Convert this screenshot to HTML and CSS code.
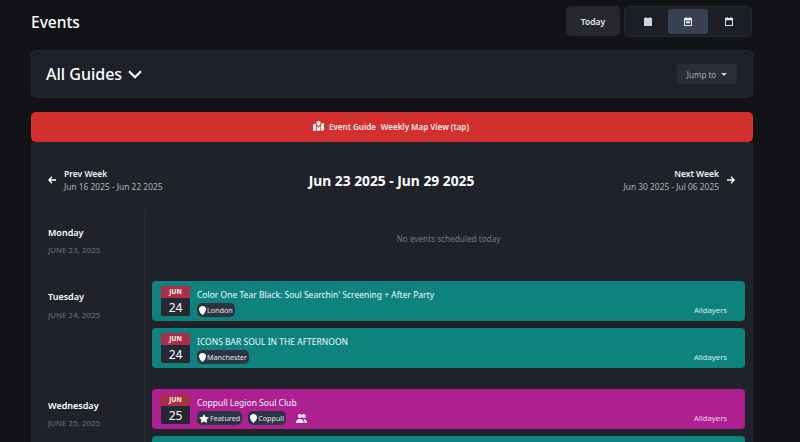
FILE: index.html
```html
<!DOCTYPE html>
<html>
  <head>
    <title>Events</title>
    <link rel="stylesheet" href="styles.css">
  </head>
  <body>
    <div class="topbar">
      <h1>Events</h1>
      <div class="top-actions">
        <button class="today">Today</button>
        <div class="views">
          <span class="view">
            <svg width="8" height="9" viewBox="0 0 10 11"><path fill="#cbd5e1" d="M2 0h1.4v1.2h3.2V0H8v1.2h2V11H0V1.2h2z"/></svg>
          </span>
          <span class="view active">
            <svg width="8" height="9" viewBox="0 0 10 11"><path fill="#f1f5f9" fill-rule="evenodd" d="M2 0h1.4v1.2h3.2V0H8v1.2h2V11H0V1.2h2zM1.2 4v5.8h7.6V4zM2.5 5.2h5v2.6h-5z"/></svg>
          </span>
          <span class="view">
            <svg width="8" height="9" viewBox="0 0 10 11"><path fill="#e2e8f0" fill-rule="evenodd" d="M2 0h1.4v1.2h3.2V0H8v1.2h2V11H0V1.2h2zM1.2 4v5.8h7.6V4z"/></svg>
          </span>
        </div>
      </div>
    </div>

    <div class="guides">
      <div class="guides-title">
        All Guides
        <svg width="14" height="9" viewBox="0 0 14 9"><path fill="none" stroke="#fff" stroke-width="2.2" d="M1 1.2l6 6 6-6"/></svg>
      </div>
      <button class="jump">Jump to <span class="caret"></span></button>
    </div>

    <div class="banner">
      <svg width="11" height="10" viewBox="0 0 11 10"><path fill="#fff" d="M5.5 0C4.2 0 3.3 1 3.3 2.1c0 .9 1.3 2.5 2.2 3.4.9-.9 2.2-2.5 2.2-3.4C7.700 1 6.800 0 5.500 0zM0 3.800l2.900-1v6.600L0 10zM3.700 5v5l3.600-.6V5l-1.800 1.700zM8.100 3l2.900-1v7l-2.900 1z"/></svg>
      <span>Event Guide</span>
      <span>Weekly Map View (tap)</span>
    </div>

    <div class="calendar">
      <div class="week-nav">
        <div class="week-link">
          <svg width="8" height="8" viewBox="0 0 8 8"><path fill="none" stroke="#fff" stroke-width="1.300" d="M4 .8L.9 4 4 7.200M1 4h7"/></svg>
          <div>
            <div class="week-label">Prev Week</div>
            <div class="week-dates">Jun 16 2025 - Jun 22 2025</div>
          </div>
        </div>
        <div class="week-current">Jun 23 2025 - Jun 29 2025</div>
        <div class="week-link next">
          <div>
            <div class="week-label">Next Week</div>
            <div class="week-dates">Jun 30 2025 - Jul 06 2025</div>
          </div>
          <svg width="8" height="8" viewBox="0 0 8 8"><path fill="none" stroke="#fff" stroke-width="1.300" d="M4 .8L7.100 4 4 7.200M7 4H0"/></svg>
        </div>
      </div>

      <div class="day monday">
        <div class="day-name">
          <strong>Monday</strong>
          <span>JUNE 23, 2025</span>
        </div>
        <div class="day-events empty">No events scheduled today</div>
      </div>

      <div class="day tuesday">
        <div class="day-name">
          <strong>Tuesday</strong>
          <span>JUNE 24, 2025</span>
        </div>
        <div class="day-events">
          <div class="event teal">
            <div class="date-tile"><b>JUN</b><span>24</span></div>
            <div class="event-info">
              <div class="event-title">Color One Tear Black: Soul Searchin' Screening + After Party</div>
              <div class="tags">
                <span class="tag"><svg width="7" height="9" viewBox="0 0 7 9"><path fill="#fff" d="M3.500 0C1.500 0 0 1.500 0 3.400 0 5 1.900 7.700 3.500 9 5.100 7.700 7 5 7 3.400 7 1.500 5.500 0 3.500 0z"/></svg>London</span>
              </div>
            </div>
            <div class="event-type">Alldayers</div>
          </div>
          <div class="event teal">
            <div class="date-tile"><b>JUN</b><span>24</span></div>
            <div class="event-info">
              <div class="event-title">ICONS BAR SOUL IN THE AFTERNOON</div>
              <div class="tags">
                <span class="tag"><svg width="7" height="9" viewBox="0 0 7 9"><path fill="#fff" d="M3.500 0C1.500 0 0 1.500 0 3.400 0 5 1.900 7.700 3.500 9 5.100 7.700 7 5 7 3.400 7 1.500 5.500 0 3.500 0z"/></svg>Manchester</span>
              </div>
            </div>
            <div class="event-type">Alldayers</div>
          </div>
        </div>
      </div>

      <div class="day wednesday">
        <div class="day-name">
          <strong>Wednesday</strong>
          <span>JUNE 25, 2025</span>
        </div>
        <div class="day-events">
          <div class="event pink">
            <div class="date-tile"><b>JUN</b><span>25</span></div>
            <div class="event-info">
              <div class="event-title">Coppull Legion Soul Club</div>
              <div class="tags">
                <span class="tag"><svg width="10" height="9" viewBox="0 0 10 9"><path fill="#fff" d="M5 0l1.500 3 3.500.4-2.500 2.300.7 3.300L5 7.400 1.800 9l.7-3.300L0 3.400 3.500 3z"/></svg>Featured</span>
                <span class="tag"><svg width="7" height="9" viewBox="0 0 7 9"><path fill="#fff" d="M3.500 0C1.500 0 0 1.500 0 3.400 0 5 1.900 7.700 3.500 9 5.100 7.700 7 5 7 3.400 7 1.500 5.500 0 3.500 0z"/></svg>Coppull</span>
                <svg class="people" width="11" height="9" viewBox="0 0 11 9"><path fill="#fff" d="M3.800 0a2 2 0 1 1 0 4 2 2 0 0 1 0-4zM7.800 0a2 2 0 1 1 0 4 2 2 0 0 1 0-4zM0 9c0-2.500 1.500-4 3.800-4s3.800 1.500 3.800 4zM8.500 9c0-1.500-.3-2.700-1.100-3.800 2.100-.3 3.600 1.300 3.600 3.800z"/></svg>
              </div>
            </div>
            <div class="event-type">Alldayers</div>
          </div>
          <div class="event teal"></div>
        </div>
      </div>
    </div>
  </body>
</html>
```

FILE: styles.css
```css
html, body {
  height: 442px;
  overflow: hidden;
}
body {
  margin: 0;
  padding: 0 47px 0 31px;
  background-color: #111317;
  color: #fff;
  font-family: "Noto Sans", "Open Sans", sans-serif;
  font-size: 9px;
}
button {
  font-family: inherit;
  border: 0;
}
.topbar {
  height: 50px;
  display: flex;
  justify-content: space-between;
  align-items: flex-start;
}
h1 {
  margin: 10px 0 0;
  font-size: 15.500px;
  line-height: 24px;
  font-weight: 500;
}
.top-actions {
  display: flex;
  gap: 4px;
  padding: 6px 1px 0 0;
}
.today {
  width: 54px;
  height: 30px;
  padding: 0;
  border-radius: 5px;
  background-color: #26282d;
  color: #e5e7eb;
  font-size: 8.500px;
  font-weight: 600;
}
.views {
  display: flex;
  width: 128px;
  height: 31px;
  box-sizing: border-box;
  padding: 2px;
  border-radius: 5px;
  border: 1px solid #24272e;
  background-color: #1b1e25;
}
.view {
  flex: 1;
  display: flex;
  align-items: center;
  justify-content: center;
  border-radius: 3px;
}
.view.active {
  flex: 0 0 40px;
  background-color: #364152;
}
.guides {
  height: 48px;
  box-sizing: border-box;
  display: flex;
  justify-content: space-between;
  align-items: center;
  padding: 0 15px 0 14px;
  border-radius: 5px;
  border: 1px solid #262a32;
  background-color: #1d2029;
}
.guides-title {
  display: flex;
  align-items: center;
  gap: 6px;
  font-size: 16px;
  font-weight: 500;
}
.jump {
  width: 60px;
  height: 20px;
  padding: 0;
  border-radius: 4px;
  background-color: #2a2d34;
  color: #a3aec0;
  font-size: 8px;
  display: flex;
  align-items: center;
  justify-content: center;
  gap: 5px;
}
.caret {
  border: 3px solid transparent;
  border-top: 3px solid #d1d5db;
  border-bottom: 0;
}
.banner {
  margin-top: 14px;
  height: 30px;
  padding: 0 2px 2px 0;
  box-sizing: border-box;
  display: flex;
  align-items: center;
  justify-content: center;
  gap: 5px;
  background-color: #d32f2f;
  border-radius: 5px;
  font-weight: 600;
  font-size: 8px;
  color: #fdeaea;
}
.calendar {
  background-color: #1f2229;
  border-right: 1px solid #262a32;
}
.week-nav {
  height: 68px;
  box-sizing: border-box;
  display: flex;
  justify-content: space-between;
  align-items: center;
  padding: 8px 17px 0;
}
.week-link {
  display: flex;
  align-items: center;
  gap: 8px;
  width: 160px;
}
.week-link.next {
  justify-content: flex-end;
  text-align: right;
}
.week-label {
  font-size: 8.500px;
  line-height: 12px;
  font-weight: 600;
  color: #eef2f7;
}
.week-dates {
  font-size: 8.400px;
  line-height: 13px;
  color: #b0b5bd;
}
.week-current {
  font-size: 13.800px;
  font-weight: 700;
}
.day {
  display: flex;
}
.day-name {
  width: 114px;
  flex: none;
  box-sizing: border-box;
  padding-left: 17px;
  border-right: 1px solid #2a2d35;
}
.day-name strong {
  display: block;
  font-size: 9px;
  font-weight: 600;
  line-height: 12px;
}
.day-name span {
  display: block;
  margin-top: 6px;
  font-size: 7.800px;
  line-height: 12px;
  letter-spacing: 0.100px;
  color: #6f7682;
}
.monday .day-name {
  height: 71px;
  padding-top: 17px;
}
.monday .day-name span {
  margin-top: 5px;
}
.tuesday .day-name {
  height: 108px;
  padding-top: 10px;
}
.wednesday .day-name {
  padding-top: 11px;
}
.wednesday .day-name span {
  margin-top: 5px;
}
.day-events {
  flex: 1;
  padding: 0 7px;
}
.empty {
  height: 57px;
  padding-bottom: 14px;
  display: flex;
  align-items: center;
  justify-content: center;
  color: #737a86;
  font-size: 8.200px;
}
.event {
  height: 40px;
  margin-bottom: 7px;
  box-sizing: border-box;
  padding: 5px 9px;
  border-radius: 4px;
  display: flex;
}
.teal {
  background-color: #0e837e;
}
.pink {
  background-color: #ae1f8f;
}
.date-tile {
  width: 29px;
  height: 30px;
  flex: none;
  border-radius: 2px;
  overflow: hidden;
  background-color: #252833;
  text-align: center;
}
.date-tile b {
  display: block;
  height: 12px;
  background-color: #a92f45;
  font-size: 6.500px;
  line-height: 12px;
  font-weight: 700;
}
.date-tile span {
  display: block;
  font-size: 12px;
  line-height: 19px;
}
.event-info {
  flex: 1;
  padding-left: 7px;
  min-width: 0;
}
.event-title {
  font-size: 8.500px;
  line-height: 13px;
  margin: 2px 0 2px;
  color: #eefbfa;
}
.tags {
  display: flex;
  align-items: center;
  gap: 6px;
}
.tag {
  display: flex;
  align-items: center;
  gap: 1px;
  height: 14px;
  padding: 0 2px;
  border-radius: 5px;
  background-color: #2c3442;
  font-size: 7.200px;
  color: #e5e7eb;
}
.people {
  margin-left: 4px;
}
.event-type {
  align-self: flex-end;
  margin-right: 9px;
  font-size: 7.700px;
  line-height: 11px;
  color: #d7eeec;
}
.pink .event-type {
  color: #f3d3ec;
}
```
